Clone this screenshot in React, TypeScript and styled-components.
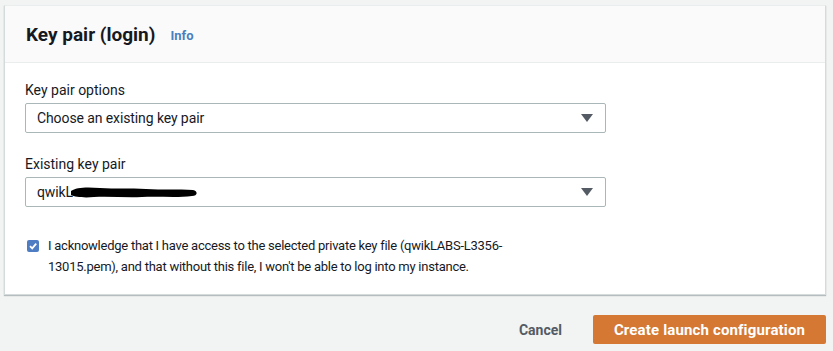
import React from 'react';
import styled, { createGlobalStyle } from 'styled-components';

const GlobalStyle = createGlobalStyle`
  body {
    margin: 0;
    background: #f2f3f3;
    font-family: Roboto, "Noto Sans", Arial, sans-serif;
    color: #16191f;
  }
`;

const Page = styled.div`
  padding: 5px 7px 0 4px;
`;

const Card = styled.section`
  background: #fff;
  border: 1px solid #d5dbdb;
  border-top-color: #eaeded;
  box-shadow: 0 1px 1px rgba(0, 27, 43, 0.25);
`;

const Header = styled.header`
  background: #fafafa;
  border-bottom: 1px solid #eaeded;
  height: 56px;
  padding: 0 21px;
  display: flex;
  align-items: center;
  gap: 15px;
`;

const Title = styled.h2`
  margin: 0;
  font-size: 19px;
  font-weight: 700;
  color: #16191f;
`;

const InfoLink = styled.a`
  font-size: 13px;
  font-weight: 700;
  color: #4a7fbf;
  text-decoration: none;
  margin-top: 3px;
`;

const Body = styled.div`
  padding: 17px 20px 17px 20px;
  display: flex;
  flex-direction: column;
`;

const Field = styled.div`
  margin-bottom: 21px;
`;

const Label = styled.div`
  font-size: 14px;
  line-height: 20px;
  margin-bottom: 3px;
`;

const SelectBox = styled.div`
  width: 581px;
  height: 30px;
  box-sizing: border-box;
  border: 1px solid #aab7b8;
  border-radius: 2px;
  display: flex;
  align-items: center;
  padding: 0 11px;
  font-size: 14px;
  letter-spacing: -0.1px;
`;

const SelectText = styled.span`
  flex: 1;
  display: flex;
  align-items: center;
`;

const Arrow = styled.span`
  width: 0;
  height: 0;
  border-left: 6px solid transparent;
  border-right: 6px solid transparent;
  border-top: 8px solid #545b64;
  margin-right: 1px;
`;

const Redaction = () => (
  <svg width="128" height="14" viewBox="0 0 128 14" style={{ marginLeft: -3 }}>
    <path
      d="M1 6 C6 2 18 2 30 3 C45 4 60 3 76 4 C92 5 108 4 123 5 C128 6 128 11 122 11 C106 13 88 11 72 12 C56 13 40 11 24 12 C14 13 5 12 1 10 Z"
      fill="#000"
    />
  </svg>
);

const CheckRow = styled.label`
  display: flex;
  gap: 9px;
  align-items: flex-start;
  font-size: 13px;
  letter-spacing: -0.25px;
  line-height: 21px;
  margin-top: 7px;
  padding-left: 2px;
`;

const CheckBox = styled.span`
  width: 12px;
  height: 12px;
  flex: none;
  border-radius: 2px;
  background: #4f7dc4;
  margin-top: 5px;
  display: flex;
  align-items: center;
  justify-content: center;
`;

const CheckText = styled.span`
  width: 470px;
`;

const Footer = styled.div`
  display: flex;
  justify-content: flex-end;
  align-items: center;
  gap: 31px;
  padding: 20px 0 0;
`;

const CancelButton = styled.button`
  background: none;
  border: none;
  font-family: inherit;
  font-size: 14px;
  font-weight: 700;
  color: #545b64;
  padding: 0;
`;

const PrimaryButton = styled.button`
  background: #d47834;
  border: none;
  border-radius: 2px;
  color: #fff;
  font-family: inherit;
  font-size: 15px;
  letter-spacing: 0.15px;
  font-weight: 700;
  height: 29px;
  width: 233px;
`;

export default function App() {
  return (
    <>
      <GlobalStyle />
      <Page>
        <Card>
          <Header>
            <Title>Key pair (login)</Title>
            <InfoLink href="#">Info</InfoLink>
          </Header>
          <Body>
            <Field>
              <Label>Key pair options</Label>
              <SelectBox>
                <SelectText>Choose an existing key pair</SelectText>
                <Arrow />
              </SelectBox>
            </Field>
            <Field>
              <Label>Existing key pair</Label>
              <SelectBox>
                <SelectText>
                  qwikL
                  <Redaction />
                </SelectText>
                <Arrow />
              </SelectBox>
            </Field>
            <CheckRow>
              <CheckBox>
                <svg width="10" height="10" viewBox="0 0 10 10">
                  <path d="M2 5.2 L4.2 7.4 L8.2 2.6" stroke="#fff" strokeWidth="1.8" fill="none" />
                </svg>
              </CheckBox>
              <CheckText>
                I acknowledge that I have access to the selected private key file (qwikLABS-L3356-13015.pem), and
                that without this file, I won't be able to log into my instance.
              </CheckText>
            </CheckRow>
          </Body>
        </Card>
        <Footer>
          <CancelButton>Cancel</CancelButton>
          <PrimaryButton>Create launch configuration</PrimaryButton>
        </Footer>
      </Page>
    </>
  );
}
